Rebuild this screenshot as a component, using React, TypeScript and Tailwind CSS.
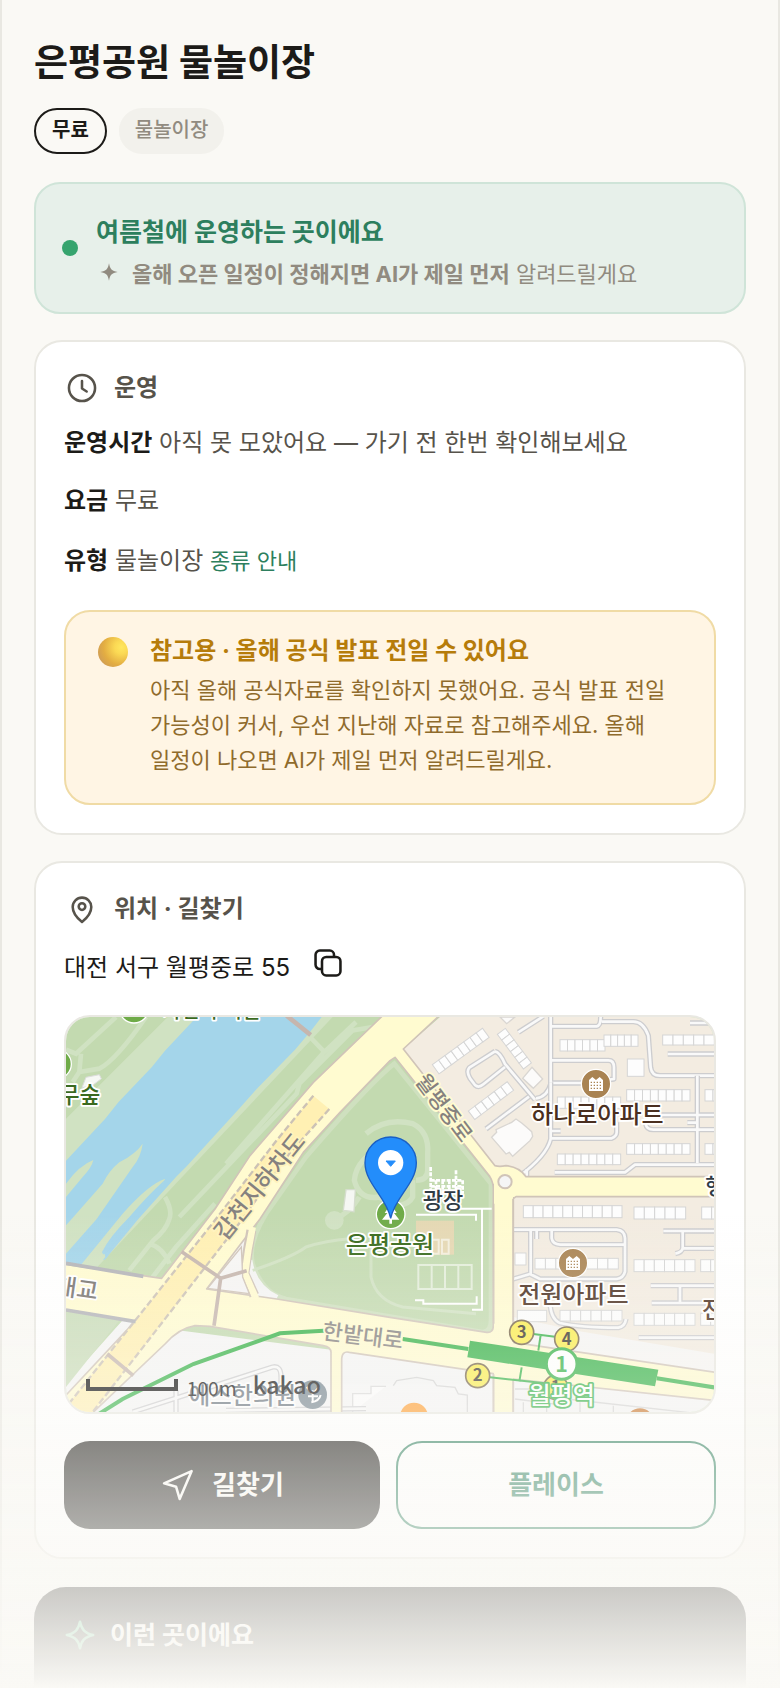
import React from 'react';

const Icon: React.FC<{ className?: string; children: React.ReactNode }> = ({ className = '', children }) => (
    <svg
        viewBox="0 0 24 24"
        fill="none"
        stroke="currentColor"
        strokeWidth={1.7}
        strokeLinecap="round"
        strokeLinejoin="round"
        aria-hidden="true"
        className={`size-9 shrink-0 ${className}`}
    >
        {children}
    </svg>
);

const ClockIcon = () => (
    <Icon>
        <circle cx="12" cy="12" r="8.7" />
        <path d="M12 7.4v4.9l3.1 2" />
    </Icon>
);

const PinIcon = () => (
    <Icon>
        <path d="M12 20.6c-2-1.6-6.2-5.6-6.2-10a6.2 6.2 0 0 1 12.4 0c0 4.4-4.2 8.4-6.2 10z" />
        <circle cx="12" cy="10.4" r="2.2" />
    </Icon>
);

const CopyIcon = () => (
    <Icon>
        <rect x="8" y="8" width="12.3" height="12.3" rx="2.8" />
        <path d="M7.5 16H6.5A2.8 2.8 0 0 1 3.7 13.2V6.5A2.8 2.8 0 0 1 6.5 3.7H13.2A2.8 2.8 0 0 1 16 6.5V7.5" />
    </Icon>
);

const SendIcon = () => (
    <Icon>
        <path d="M21.1 2.7 2.7 10.9l8 2.2 2.4 8.2z" />
    </Icon>
);

const SparkleIcon = () => (
    <Icon className="text-[#5cc48f]">
        <path d="M12 3.2c1 5 3.2 7.6 8.8 8.8-5.6 1.2-7.8 3.8-8.8 8.8-1-5-3.2-7.6-8.8-8.8 5.6-1.2 7.8-3.8 8.8-8.8z" />
    </Icon>
);

type Row = [x: number, y: number, w: number, h: number, units: number, angle?: number];

const NORTH_BLOCKS: Row[] = [
    [540, 122, 135, 34, 6],
    [672, 108, 102, 34, 5],
    [848, 108, 155, 30, 5],
    [740, 272, 190, 34, 8],
    [975, 272, 48, 34, 2],
    [532, 294, 190, 34, 8],
    [532, 465, 190, 32, 8],
    [740, 434, 190, 32, 8],
    [975, 434, 48, 32, 2],
    [742, 180, 50, 52, 1],
    [430, 620, 296, 36, 10],
    [762, 624, 155, 36, 5],
    [965, 624, 60, 36, 2],
    [157, 197, 186, 34, 8, -36],
    [265, 336, 146, 32, 6, -37],
    [376, 88, 130, 30, 6, 53],
];

const SOUTH_BLOCKS: Row[] = [
    [465, 148, 250, 32, 8],
    [540, 304, 186, 32, 6],
    [405, 132, 33, 36, 1],
    [412, 304, 88, 34, 1],
    [762, 152, 183, 36, 6],
    [962, 152, 60, 36, 2],
    [762, 313, 183, 36, 6],
    [962, 313, 60, 36, 2],
];

const Blocks: React.FC<{ rows: Row[] }> = ({ rows }) => (
    <g fill="#fdfdfd" stroke="#d5d5d5" strokeWidth="3">
        {rows.map(([x, y, w, h, units, angle = 0]) => (
            <g key={`${x}-${y}`} transform={`translate(${x} ${y}) rotate(${angle})`}>
                {Array.from({ length: units }, (_, i) => (
                    <rect key={i} x={(w / units) * i} width={w / units} height={h} />
                ))}
            </g>
        ))}
    </g>
);

const Lane: React.FC<{ d: string }> = ({ d }) => (
    <g fill="none" strokeLinejoin="round">
        <path d={d} stroke="#cdcdcf" strokeWidth="16" />
        <path d={d} stroke="#f9f9f9" strokeWidth="8" />
    </g>
);

const Label: React.FC<{
    x: number;
    y: number;
    size: number;
    fill: string;
    halo?: string;
    angle?: number;
    anchor?: 'start' | 'middle' | 'end';
    children: string;
}> = ({ x, y, size, fill, halo = '#ffffff', angle = 0, anchor = 'middle', children }) => (
    <text
        transform={`translate(${x} ${y}) rotate(${angle})`}
        fontSize={size}
        fontWeight={500}
        textAnchor={anchor}
        fill={fill}
        stroke={halo}
        strokeWidth="11"
        strokeLinejoin="round"
        paintOrder="stroke"
    >
        {children}
    </text>
);

const ApartmentMark: React.FC<{ x: number; y: number }> = ({ x, y }) => (
    <g transform={`translate(${x} ${y})`}>
        <circle r="44" fill="#a98352" stroke="#fff" strokeWidth="4" />
        <path d="M-21 21V-12l10-9 11 9 11-9 10 9V21z" fill="#fff" />
        <path d="M-16-5h32M-16 4h32M-16 13h32" stroke="#a98352" strokeWidth="4" strokeDasharray="4 5" />
    </g>
);

const EXITS: [string, number, number][] = [
    ['1', 1469, 1111],
    ['2', 1235, 1076],
    ['3', 1367, 946],
    ['4', 1502, 966],
];

const ParkMap = () => (
    <svg
        viewBox="0 0 1944 1185"
        preserveAspectRatio="xMidYMid slice"
        role="img"
        aria-label="은평공원 주변 지도"
        className="block size-full font-['Noto_Sans_CJK_KR',sans-serif]"
    >
        <rect width="1944" height="1185" fill="#c3dab0" />

        {/* river and banks */}
        <path d="M305 0H800L0 850V305z" fill="#d0e2c2" />
        <path d="M392 0H767L732 45 687 98 572 216 522 272 362 448 332 478 217 606 130 712Q112 740 110 722L120 690 190 600 297 486Q250 500 170 590L47 741 0 741V431L117 306 157 256 257 151 297 101z" fill="#a4d5ea" />
        <path d="M0 500Q40 445 82 429 78 450 50 480L0 540z" fill="#d0e2c2" />
        <path d="M17 606 110 500Q130 460 160 436 210 410 230 380 225 420 200 450L92 606 0 710V625z" fill="#d0e2c2" />
        <path d="M60 741 192 590Q230 520 297 486 290 510 250 550L130 690Q112 710 118 720L100 741z" fill="#d0e2c2" />
        <path d="M297 488Q280 530 235 570L135 690Q112 725 108 705 130 660 190 600 240 540 297 488z" fill="#a4d5ea" />
        <g fill="none" stroke="#d0e2c2" strokeWidth="14">
            <path d="M0 98 30 110 150 0M240 0Q150 130 100 155L40 165 45 110M40 165l-20 30" />
            <path d="M920 30 860 40 700 200 692 230 520 410 340 600 M870 15 770 110 480 440 M732 60 780 110" />
            <path d="M297 540Q320 580 310 606 300 640 262 670L190 760M250 680Q290 690 310 740M447 560 330 690 260 780" />
        </g>
        <path d="M60 181 100 173 106 185 80 205 48 212z" fill="#f6f8f4" stroke="#ddd" strokeWidth="3" />
        <path d="M662 -4 734 54" stroke="#c6b6ae" strokeWidth="14" />

        {/* city ground */}
        <path d="M1122 0H1944V1066L1342 976V480H1300L1012 96z" fill="#f3ece1" />
        <path d="M1342 900 1532 941 1944 1010V1080L1342 990z" fill="#f6f5f4" />
        <path d="M0 1185V1100L170 910 260 930 1282 1060 1944 1130V1185z" fill="#f5f5f5" />
        <path d="M0 876 160 910 0 1110z" fill="#c9dcb9" />
        <path d="M540 650 560 740 600 830 680 850 420 820 520 686z" fill="#f4f4f3" />

        {/* park details */}
        <path d="M985 140Q910 200 720 420L600 590Q545 680 560 740 590 830 660 846L1250 945Q1275 945 1275 910V500z" fill="#c3dab0" stroke="#cfe0bf" strokeWidth="14" />
        <path d="M548 730Q560 810 632 845" fill="none" stroke="#f4f4f3" strokeWidth="22" />
        <g fill="none" stroke="#d1e2c3" strokeWidth="16">
            <path d="M900 350Q960 300 1040 320 1090 345 1085 410V460Q1085 490 1050 490M1040 490V540Q1030 560 1000 565" />
            <path d="M970 380Q870 420 865 490 880 550 940 540 980 560 970 590M800 610Q850 590 880 540" />
            <path d="M560 760Q680 720 720 690 780 670 850 665M915 640V780Q930 850 1010 870L1230 890" strokeWidth="9" />
        </g>
        <circle cx="805" cy="610" r="28" fill="#d1e2c3" />
        <path d="M840 518h28l-4 66-32-4z" fill="#f5f7f3" stroke="#d5ddcd" strokeWidth="4" />
        <rect x="1050" y="611" width="114" height="102" fill="#e5d8b3" />
        <g fill="none" stroke="#fff" strokeWidth="6">
            <path d="M1057 744h160v72h-160zM1097 744v72M1137 744v72M1177 744v72" stroke="#e4eedb" />
            <path d="M1098 668h20v42h-20zM1128 668h20v42h-20z" stroke="#f3eedd" />
            <path d="M1050 593h180v18M1180 575h97M1248 575V878h-30M1232 838v22h-160v-10h-25" />
            <path d="M1094 450v80M1094 490h96M1094 508h96M1094 524h96M1110 490v40M1130 490v40M1150 490v40M1170 460v70M1190 490v40" strokeDasharray="12 4" strokeWidth="8" />
        </g>

        {/* apartment blocks */}
        <g transform="translate(942 -54)">
            <Lane d="M512 54V258M516 82H650Q662 80 662 54M665 68H760Q790 68 805 110L812 205Q815 230 840 230H1010M516 184H685Q702 184 702 205V240L600 252H516" />
            <Lane d="M345 157 268 206Q258 218 270 238L285 258Q296 268 310 256L375 204M345 157Q360 160 375 195L465 302M512 256Q500 295 468 298M318 390 447 293M415 100 490 52" />
            <Lane d="M512 250V420Q500 470 420 530M512 418H695Q710 412 710 400V370M512 396h30M440 510v26M524 520H735L765 497H1010M952 230V492M840 348H1010M797 375Q800 392 820 392H1010M863 165H1010M930 72H1010M922 371H950" />
            <Blocks rows={NORTH_BLOCKS} />
            <g fill="#fcfbfa" stroke="#d9d6d2" strokeWidth="4">
                <path d="M428 238 456 205 488 240 460 268zM335 415 350 400 348 392 395 370 408 360 425 372 440 385 455 398 458 412 450 425 398 472 388 460 378 465zM360 54H405L380 74z" />
            </g>
        </g>
        <g transform="translate(942 576)">
            <Lane d="M400 62H710Q735 65 735 88V188Q730 208 710 210H480L450 195 400 210M452 62V195M470 66v24M515 66V88Q518 106 540 107H732" />
            <Lane d="M510 280Q512 330 540 342 600 356 715 356 735 352 738 330M850 66H1010M908 66V118Q906 130 886 134M908 118H1010M812 230H1010M900 230V282M815 282H1010M776 386H1010" />
            <Blocks rows={SOUTH_BLOCKS} />
            <path d="M40 530 50 515 110 505 160 515 170 530 225 535 235 555 262 558V640M405 540H470L560 570 1010 620M405 570 560 590M430 580v60M500 590v60M600 580v60M700 590v50" fill="none" stroke="#d4d4d4" strokeWidth="4" />
        </g>
        <path d="M660 883 703 875V930L662 937zM860 1185V1130H915V1108H960" fill="#fcfcfc" stroke="#d9d9d9" strokeWidth="4" />
        <Lane d="M200 1185 620 1050Q645 1045 645 1080V1110M330 1120V1185M480 1180 900 1175" />

        {/* main roads */}
        <path
            d="M1282 500V930Q1280 948 1262 946L972 901 632 846 422 816 540 660 582 606 712 406 822 286 972 131 987 121 1270 476Q1285 500 1282 530V560H1342V545L1350 539H1950V479H1380Q1360 450 1320 446 1300 450 1287 446L1012 96 1122 -6H952L742 196 552 416 447 576 287 784-10 741V876L207 913-10 1145V1195H72L297 981Q337 935 387 926L432 928 772 986Q797 990 795 1010V1195H827V1030Q827 1000 850 1006L1282 1070V1195H1342V1086L1950 1151V1066L1342 976V540"
            fill="#fffbd0"
            stroke="#d0c4b8"
            strokeWidth="5"
            strokeLinejoin="round"
        />
        <path d="M1284 480H1341V1185H1284z" fill="#fffbd0" />
        <path d="M1341 975V545M1341 1090V1185M1283 560V920M1283 1072V1185" stroke="#d0c4b8" strokeWidth="5" />
        <path d="M556 640Q545 700 535 770L565 835" fill="none" stroke="#d0c4b8" strokeWidth="30" />
        <path d="M560 630Q545 700 537 770L570 845" fill="none" stroke="#fffbd0" strokeWidth="20" />
        <path d="M526 690 530 780 550 830 425 814z" fill="#f6f5f4" stroke="#d0c4b8" strokeWidth="4" />
        <circle cx="1317" cy="494" r="20" fill="#f5f5f5" stroke="#d0c4b8" strokeWidth="6" />

        {/* underpass */}
        <path d="M742 236 632 370 442 616 12 1156 0 1185H80L522 616 670 410 790 276z" fill="#fff0b3" />
        <path d="M742 236 632 370 442 616 12 1156M790 276 670 410 522 616 80 1185" fill="none" stroke="#ccc2b5" strokeWidth="7" strokeDasharray="20 9" />
        <g fill="none" stroke="#c6b6ae" strokeWidth="11">
            <path d="M347 704 464 784 542 761M464 784 444 926M124 1011 202 1076" />
            <path d="M0 739 232 778M0 879 209 914" stroke="#b4b4b8" />
        </g>

        {/* subway */}
        <g fill="none" stroke="#38b34a" strokeWidth="12">
            <path d="M100 1190 170 1146 382 1041 642 949 772 941M1010 966 1207 996M1772 1084 1950 1112" />
            <path d="M772 941 1010 966" strokeDasharray="8 24" />
            <path d="M1402 951 1467 959M1424 954 1417 1001M1272 1081 1457 1101M1367 1051 1360 1094" strokeWidth="6" />
        </g>
        <path d="M1212 971 1777 1058 1767 1108 1204 1021z" fill="#38b34a" />
        {EXITS.map(([name, x, y]) => (
            <g key={name}>
                <circle cx={x} cy={y} r="36" fill="#fbee50" stroke="#77664a" strokeWidth="5" />
                <text x={x} y={y + 17} fontSize="50" fontWeight="700" textAnchor="middle" fill="#3a352c">
                    {name}
                </text>
            </g>
        ))}
        <circle cx="1487" cy="1041" r="46" fill="#fff" stroke="#38b34a" strokeWidth="9" />
        <text x="1487" y="1064" fontSize="64" fontWeight="700" textAnchor="middle" fill="#38b34a">
            1
        </text>

        {/* place marks */}
        <circle cx="204" cy="-26" r="44" fill="#6fab48" stroke="#fff" strokeWidth="4" />
        <circle cx="-28" cy="141" r="44" fill="#6fab48" stroke="#fff" strokeWidth="4" />
        <ApartmentMark x={1590} y={201} />
        <ApartmentMark x={1521} y={738} />
        <circle cx="740" cy="1133" r="43" fill="#74848e" />
        <path d="M722 1110 740 1130 760 1110M740 1120V1156M726 1138H756M736 1156q24-4 28-22" fill="none" stroke="#fff" strokeWidth="6" />
        <circle cx="1044" cy="1199" r="42" fill="#ff9d2e" />
        <circle cx="1722" cy="1216" r="42" fill="#c9762e" />
        <circle cx="974" cy="592" r="43" fill="#6fab48" stroke="#fff" strokeWidth="4" />
        <path d="M974 560 992 588H984L1000 608H978V620H970V608H948L964 588H956z" fill="#fff" />

        <Label x={290} y={3} size={60} fill="#3b6a1f" anchor="start">자연 누리길</Label>
        <Label x={103} y={257} size={68} fill="#3b6a1f" anchor="end">무숲</Label>
        <Label x={600} y={524} size={70} fill="#85817f" halo="#fff3bd" angle={-51}>갑천지하차도</Label>
        <Label x={1116} y={286} size={64} fill="#85817f" halo="#fffbd0" angle={53}>월평중로</Label>
        <Label x={92} y={848} size={70} fill="#77736f" angle={8} anchor="end">대교</Label>
        <Label x={888} y={980} size={66} fill="#85817f" halo="#fffbd0" angle={7}>한밭대로</Label>
        <Label x={1594} y={319} size={72} fill="#4a2f20">하나로아파트</Label>
        <Label x={1522} y={859} size={72} fill="#4a2f20">전원아파트</Label>
        <Label x={1131} y={574} size={66} fill="#2f3b45">광장</Label>
        <Label x={972} y={709} size={72} fill="#37691a">은평공원</Label>
        <Label x={1918} y={531} size={66} fill="#2f3b45" anchor="start">행</Label>
        <Label x={1908} y={904} size={68} fill="#4a2f20" anchor="start">전</Label>
        <Label x={1487} y={1162} size={72} fill="#ffffff" halo="#38b34a">월평역</Label>
        <Label x={529} y={1160} size={70} fill="#66717b">에스한의원</Label>

        {/* location pin */}
        <path d="M974 604C962 540 897 500 897 437a77 77 0 0 1 154 0C1051 500 986 540 974 604z" fill="#238dfb" stroke="#1a5fc4" strokeWidth="4" />
        <circle cx="974" cy="437" r="38" fill="#fff" />
        <path d="M960 432H988L974 448z" fill="#238dfb" stroke="#238dfb" strokeWidth="3" />

        {/* scale and provider */}
        <path d="M66 1086V1116H330V1086" fill="none" stroke="#0a0a0a" strokeWidth="12" />
        <text x="362" y="1138" fontSize="58" fill="#111">
            100m
        </text>
        <text x="560" y="1131" fontSize="71" fontWeight="500" fill="#111">
            kakao
        </text>
    </svg>
);

const CardHeading: React.FC<{ icon: React.ReactNode; children: React.ReactNode }> = ({ icon, children }) => (
    <h2 className="flex items-center gap-3.5 text-2xl leading-9 font-bold text-[#57534b]">
        {icon}
        {children}
    </h2>
);

const App: React.FC = () => {
    return (
        <div
            lang="ko"
            className="relative h-screen overflow-hidden border-x-2 border-[#e9e8e2] bg-[#faf9f5] px-8 pt-9 font-['Inter','Noto_Sans_CJK_KR',sans-serif] break-keep text-[#1c1b18]"
        >
            <h1 className="text-[37px] leading-[54px] font-bold">은평공원 물놀이장</h1>
            <div className="mt-[18px] flex gap-3 text-xl leading-10">
                <span className="rounded-full border-2 border-[#1c1b18] px-4 pb-0.5 font-bold">무료</span>
                <span className="rounded-full border-y-2 border-[#f2f1ec] bg-[#f2f1ec] px-4 pb-0.5 font-medium text-[#918b80]">
                    물놀이장
                </span>
            </div>

            <section className="mt-7 flex items-center gap-[18px] rounded-[26px] border-2 border-[#cfe4d8] bg-[#e7f0ea] px-[26px] py-[22px]">
                <span className="size-4 shrink-0 rounded-full bg-[#36a46e]" />
                <div>
                    <p className="text-[25px] leading-[52px] font-bold text-[#2d7f5e]">여름철에 운영하는 곳이에요</p>
                    <p className="flex items-center gap-2.5 text-[22px] leading-8 text-[#918b80]">
                        <svg viewBox="0 0 24 24" fill="currentColor" aria-hidden="true" className="mb-1 size-[26px] shrink-0">
                            <path d="M12 4C13 9.5 14.5 11 20 12 14.5 13 13 14.5 12 20 11 14.5 9.5 13 4 12 9.5 11 11 9.5 12 4z" />
                        </svg>
                        <span>
                            <b>올해 오픈 일정이 정해지면 AI가 제일 먼저</b> 알려드릴게요
                        </span>
                    </p>
                </div>
            </section>

            <section className="mt-[26px] rounded-[28px] border-2 border-[#e9e8e2] bg-white p-7">
                <CardHeading icon={<ClockIcon />}>운영</CardHeading>
                <div className="mt-4 space-y-4 text-2xl leading-[42px] text-[#57534b]">
                    <p>
                        <b className="text-[#1c1b18]">운영시간</b> 아직 못 모았어요 — 가기 전 한번 확인해보세요
                    </p>
                    <p>
                        <b className="text-[#1c1b18]">요금</b> 무료
                    </p>
                    <p className="leading-[46px]">
                        <b className="text-[#1c1b18]">유형</b> 물놀이장{' '}
                        <a href="#types" className="text-[22px] text-[#2d7f5e]">종류 안내</a>
                    </p>
                </div>
                <div className="mt-[26px] flex gap-[22px] rounded-[26px] border-2 border-[#f0dba5] bg-[#fff5e4] px-8 pt-[23px] pb-[25px]">
                    <span className="mt-0.5 size-[30px] shrink-0 rounded-full bg-[radial-gradient(circle_at_78%_34%,#ffe75f_0%,#fbd954_22%,#e3ad42_58%,#d3a052_78%,#d07f62_100%)]" />
                    <div>
                        <h3 className="text-2xl leading-8 font-bold text-[#b67c0a]">참고용 · 올해 공식 발표 전일 수 있어요</h3>
                        <p className="mt-1.5 text-[22px] leading-[35px] text-[#8f6b2c]">
                            아직 올해 공식자료를 확인하지 못했어요. 공식 발표 전일 가능성이 커서, 우선 지난해 자료로 참고해주세요. 올해 일정이 나오면 AI가 제일 먼저 알려드릴게요.
                        </p>
                    </div>
                </div>
            </section>

            <section className="mt-[26px] rounded-[28px] border-2 border-[#e9e8e2] bg-white p-7">
                <CardHeading icon={<PinIcon />}>위치 · 길찾기</CardHeading>
                <div className="mt-[18px] flex items-start gap-5 text-2xl leading-[46px]">
                    <span>대전 서구 월평중로 55</span>
                    <button type="button" aria-label="주소 복사">
                        <CopyIcon />
                    </button>
                </div>
                <div className="mt-6 h-[399px] overflow-hidden rounded-[26px] border-2 border-[#e9e8e2]">
                    <ParkMap />
                </div>
                <div className="mt-[27px] flex gap-4 text-[26px] leading-[88px] font-bold">
                    <button type="button" className="flex flex-1 items-center justify-center gap-4 rounded-[26px] bg-[#1c1b18] text-[#faf9f5]">
                        <SendIcon />
                        길찾기
                    </button>
                    <button type="button" className="flex-1 rounded-[26px] border-2 border-[#2d7f5e] leading-[84px] text-[#2d7f5e]">
                        플레이스
                    </button>
                </div>
            </section>

            <section className="mt-7 rounded-[32px] bg-[#1c1b18] p-7 pb-24">
                <h2 className="flex items-center gap-3 text-[25px] leading-10 font-bold text-white">
                    <SparkleIcon />
                    이런 곳이에요
                </h2>
            </section>

            <div className="pointer-events-none fixed inset-x-0 bottom-0 h-[480px] bg-linear-to-b from-[#faf9f5]/0 to-[#faf9f5]" />
        </div>
    );
};

export default App;
